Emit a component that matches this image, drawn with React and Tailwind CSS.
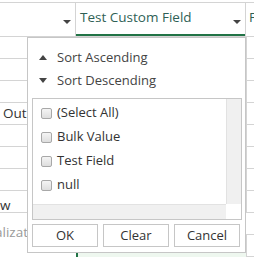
export default function App() {
  const rows = [
    { t: "" },
    { t: "" },
    { t: "" },
    { t: "Out", cls: "pl-[3px] pt-0" },
    { t: "" },
    { t: "" },
    { t: "" },
    { t: "w", cls: "pl-0 pt-[4px]" },
    { t: "alizati", cls: "-ml-[5px] pt-[9px] text-[#9a9a9a]", noLine: true },
    { t: "" },
  ];
  const items = ["(Select All)", "Bulk Value", "Test Field", "null"];
  return (
    <div className="relative w-[254px] h-[257px] overflow-hidden bg-white font-['Open_Sans',sans-serif] text-[#333]">
      {/* header */}
      <div className="mt-[2px] flex h-[35px] border-t border-b border-[#d4d4d4]">
        <div className="relative w-[76px] shrink-0 border-r border-[#d4d4d4]">
          <div className="absolute left-[63px] top-[17px] w-0 h-0 border-l-[4px] border-r-[4px] border-t-[4px] border-l-transparent border-r-transparent border-t-[#444]" />
        </div>
        <div className="relative w-[170px] shrink-0 border-r border-[#d4d4d4]">
          <div className="pl-[4px] pt-[4px] text-[13.5px] leading-[20px] text-[#2f5f55] whitespace-nowrap">Test Custom Field</div>
          <div className="absolute left-[157px] top-[17px] w-0 h-0 border-l-[4px] border-r-[4px] border-t-[4px] border-l-transparent border-r-transparent border-t-[#444]" />
          <div className="absolute left-0 right-0 bottom-[0px] h-[2px] bg-[#217346]" />
        </div>
        <div className="pl-[3px] pt-[4px] text-[13.5px] leading-[20px] text-[#2f5f55]">F</div>
      </div>
      {/* body rows */}
      <div className="flex flex-col">
        {rows.map((r, i) => (
          <div key={i} className="flex h-[22px] shrink-0">
            <div className={"w-[76px] shrink-0 whitespace-nowrap text-[13.5px] leading-[21px] " + (r.noLine || i === 9 ? "" : "border-b border-[#d4d4d4] ") + (r.cls || "")}>
              {r.t}
            </div>
            <div className={"w-[170px] shrink-0 " + (i === 9 ? "bg-[#eef7ef] border-l-2 border-[#217346]" : "border-b border-[#d4d4d4]")} />
            <div className="flex-1 border-l border-b border-[#d4d4d4]" />
          </div>
        ))}
      </div>
      {/* popup */}
      <div className="absolute left-[27px] top-[37px] w-[219px] h-[216px] border border-[#c6c6c6] bg-white flex flex-col">
        <div className="flex flex-col pt-[8px] text-[13px]">
          <div className="flex items-center h-[23px]">
            <div className="ml-[11px] w-0 h-0 border-l-[4px] border-r-[4px] border-b-[5px] border-l-transparent border-r-transparent border-b-[#444]" />
            <span className="ml-[10px] text-[#444]">Sort Ascending</span>
          </div>
          <div className="flex items-center h-[23px]">
            <div className="ml-[11px] w-0 h-0 border-l-[4px] border-r-[4px] border-t-[5px] border-l-transparent border-r-transparent border-t-[#444]" />
            <span className="ml-[10px] text-[#444]">Sort Descending</span>
          </div>
        </div>
        <div className="ml-[4px] mt-[6px] w-[210px] h-[122px] border border-[#c6c6c6] flex flex-col">
          <div className="flex h-[105px]">
            <div className="flex-1 flex flex-col pt-[2px]">
              {items.map((it) => (
                <div key={it} className="flex items-center h-[24px]">
                  <div className="ml-[8px] w-[11px] h-[11px] rounded-[2px] border border-[#a8a8a8] bg-gradient-to-b from-[#f4f4f4] to-[#dedede]" />
                  <span className="ml-[5px] text-[13px] text-[#333]">{it}</span>
                </div>
              ))}
            </div>
            <div className="w-[15px] bg-[#f0f0f0] border-l border-[#e2e2e2]" />
          </div>
          <div className="flex h-[15px]">
            <div className="flex-1 bg-[#f0f0f0] border-t border-[#e2e2e2]" />
            <div className="w-[15px] bg-white" />
          </div>
        </div>
        <div className="flex ml-[4px] mt-[4px] gap-[5px]">
          {["OK", "Clear", "Cancel"].map((b) => (
            <div key={b} className="w-[66px] h-[23px] border border-[#c6c6c6] flex items-center justify-center text-[13px] text-[#333]">
              {b}
            </div>
          ))}
        </div>
      </div>
    </div>
  );
}
